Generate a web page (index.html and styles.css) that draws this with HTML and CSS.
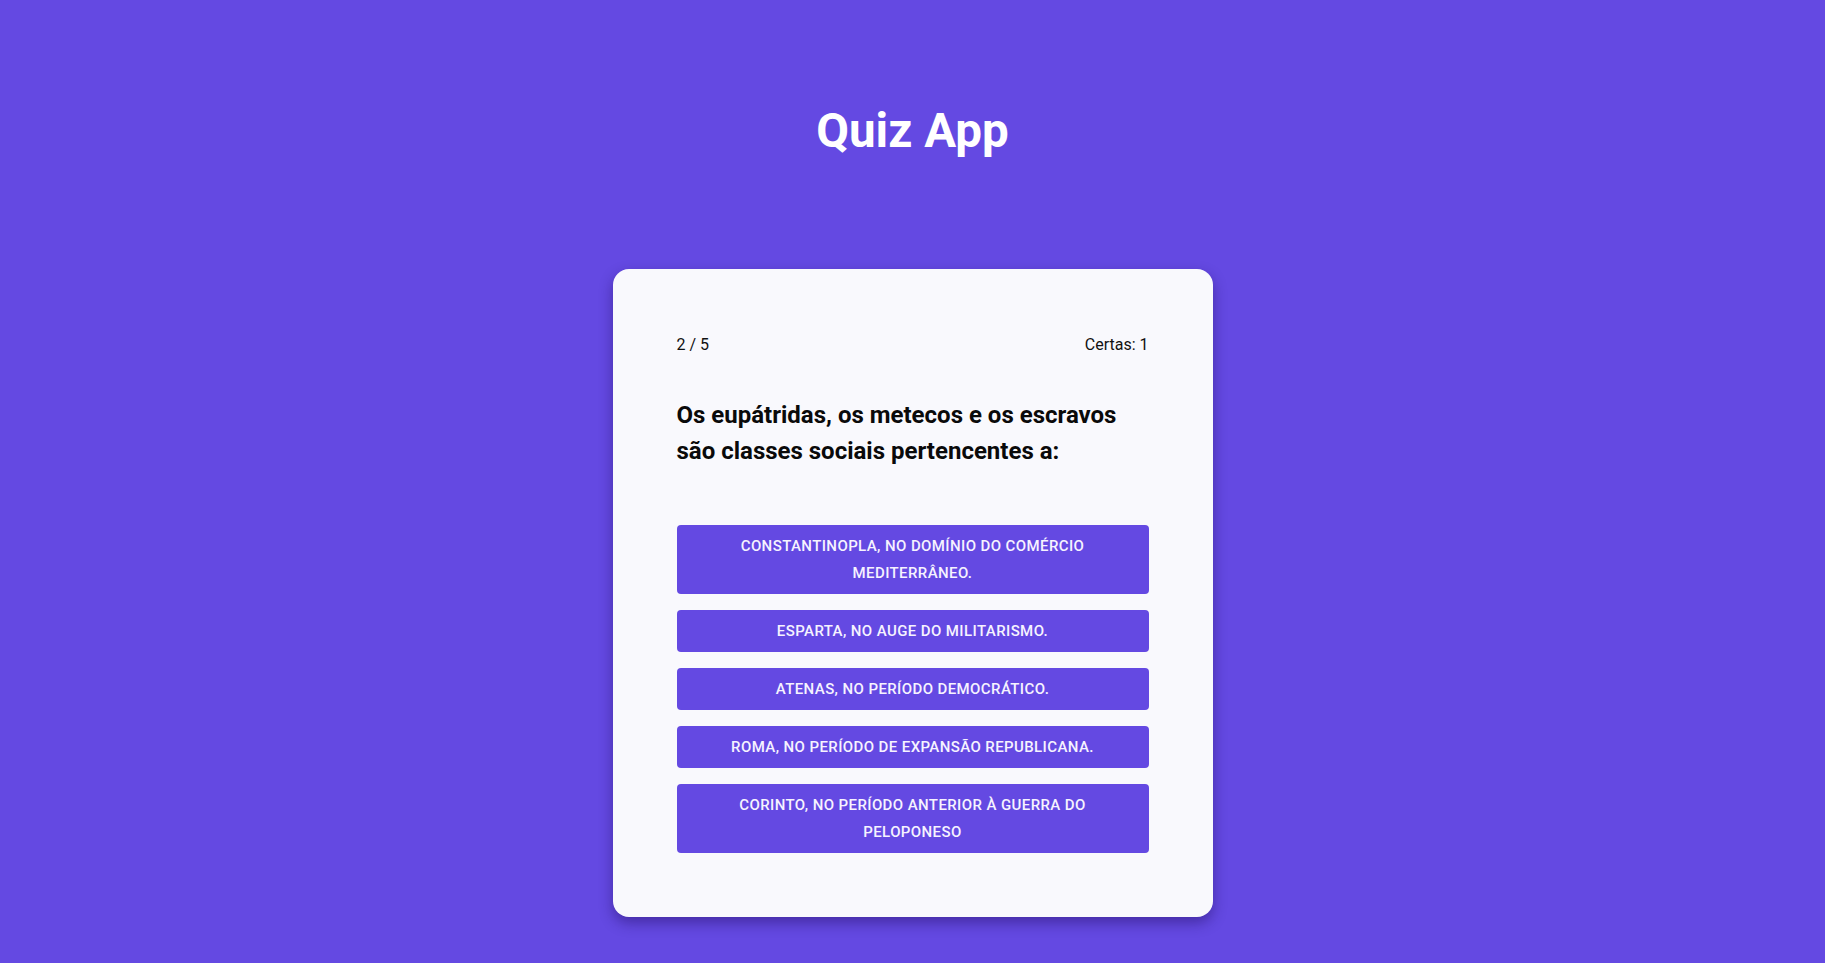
FILE: index.html
```html
<!DOCTYPE html>
<html lang="pt-BR">
<head>
<meta charset="utf-8">
<title>Quiz App</title>
<link rel="stylesheet" href="styles.css">
</head>
<body>
<main class="app">
  <h1 class="title">Quiz App</h1>
  <section class="card">
    <div class="meta">
      <span>2 / 5</span>
      <span>Certas: 1</span>
    </div>
    <h2 class="question">Os eupátridas, os metecos e os escravos são classes sociais pertencentes a:</h2>
    <div class="answers">
      <button class="answer">Constantinopla, no domínio do comércio mediterrâneo.</button>
      <button class="answer">Esparta, no auge do militarismo.</button>
      <button class="answer">Atenas, no período democrático.</button>
      <button class="answer">Roma, no período de expansão republicana.</button>
      <button class="answer">Corinto, no período anterior à guerra do Peloponeso</button>
    </div>
  </section>
</main>
</body>
</html>
```
FILE: styles.css
```css
html, body {
  margin: 0;
  padding: 0;
}
body {
  background: #6449e2;
  font-family: Roboto, "Liberation Sans", sans-serif;
  min-height: 100vh;
}
.app {
  display: flex;
  flex-direction: column;
  align-items: center;
}
.title {
  margin: 100px 0 0;
  height: 62px;
  line-height: 62px;
  font-size: 47.5px;
  font-weight: 700;
  color: #ffffff;
}
.card {
  margin-top: 107px;
  width: 600px;
  box-sizing: border-box;
  padding: 64px;
  background: #f9f9fd;
  border-radius: 16px;
  box-shadow: 0 6px 14px rgba(30, 10, 90, 0.45);
}
.meta {
  display: flex;
  justify-content: space-between;
  font-size: 16px;
  line-height: 24px;
  color: #111111;
}
.question {
  margin: 40px 0 0;
  font-size: 24px;
  line-height: 36px;
  font-weight: 700;
  color: #0a0a0a;
}
.answers {
  margin-top: 56px;
  display: flex;
  flex-direction: column;
  gap: 16px;
}
.answer {
  display: block;
  width: 100%;
  border: none;
  border-radius: 4px;
  background: #6449e2;
  color: #f6f3ff;
  font-family: Roboto, "Liberation Sans", sans-serif;
  font-size: 15px;
  font-weight: 500;
  line-height: 27px;
  letter-spacing: 0.4px;
  text-transform: uppercase;
  padding: 7.5px 16px;
  text-align: center;
  cursor: pointer;
}
```
